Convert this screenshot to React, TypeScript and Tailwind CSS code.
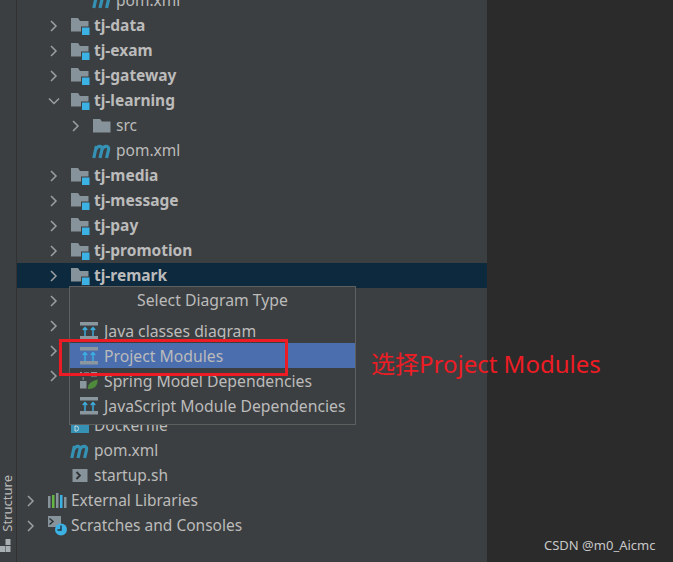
const uiFont = "font-['Noto_Sans',sans-serif]";

function Chevron({ open }: { open?: boolean }) {
  return (
    <svg width="12" height="12" viewBox="0 0 12 12" fill="none" stroke="#9c9fa1" strokeWidth="1.5">
      {open ? <path d="M1 3.5 L6 8.5 L11 3.5" /> : <path d="M3 1 L8 6 L3 11" />}
    </svg>
  );
}

function ModuleFolder() {
  return (
    <svg width="20" height="20" viewBox="0 0 20 20">
      <path d="M1 2 H8 L10 5 H18.5 V15.5 H1 Z" fill="#87939a" />
      <rect x="11" y="10.5" width="9" height="9" fill="#3c3f41" />
      <rect x="12" y="11.5" width="7.5" height="7.5" fill="#3cb1e4" />
    </svg>
  );
}

function PlainFolder() {
  return (
    <svg width="20" height="20" viewBox="0 0 20 20">
      <path d="M1 3 H8 L10 5.5 H18.5 V16.5 H1 Z" fill="#87939a" />
    </svg>
  );
}

function MavenIcon() {
  return (
    <svg width="20" height="20" viewBox="0 0 20 20" fill="none" stroke="#3592b5" strokeWidth="3.2">
      <path d="M1.8 17 L4.4 5 M3.8 8.5 Q5.8 4.8 8.2 5.4 Q10.6 6 9.9 8.8 L8 17 M10 8.5 Q12 4.8 14.6 5.4 Q17.2 6 16.5 8.8 L14.6 17" />
    </svg>
  );
}

function DockerIcon() {
  return (
    <svg width="20" height="20" viewBox="0 0 20 20">
      <rect x="1" y="8" width="18" height="9" fill="#3592b5" />
      <path d="M5 10 V15 H6.5 Q8.5 15 8.5 12.5 Q8.5 10 6.5 10 Z" fill="none" stroke="#c9d7de" strokeWidth="1" />
    </svg>
  );
}

function ScriptIcon() {
  return (
    <svg width="20" height="20" viewBox="0 0 20 20">
      <rect x="2.5" y="3" width="15" height="13" fill="#87939a" />
      <path d="M6.5 6 L10 9.5 L6.5 13" fill="none" stroke="#2f3234" strokeWidth="1.8" />
    </svg>
  );
}

function LibrariesIcon() {
  return (
    <svg width="20" height="20" viewBox="0 0 20 20">
      <rect x="1" y="5" width="2.5" height="12" fill="#87939a" />
      <rect x="5" y="4" width="2.5" height="13" fill="#62b543" />
      <rect x="9" y="2" width="2.5" height="15" fill="#87939a" />
      <rect x="13" y="4" width="2.5" height="13" fill="#3cb1e4" />
      <rect x="17" y="6" width="2.5" height="11" fill="#87939a" />
    </svg>
  );
}

function ScratchIcon() {
  return (
    <svg width="20" height="20" viewBox="0 0 20 20" className="overflow-visible">
      <rect x="1" y="0" width="13" height="11" fill="#87939a" />
      <path d="M2.5 2.5 L6 5.5 L2.5 8.5" fill="none" stroke="#2f3234" strokeWidth="1.5" />
      <circle cx="14" cy="13.5" r="6" fill="#3cb1e4" />
      <path d="M14 9.5 V14 H10.5" fill="none" stroke="#20333e" strokeWidth="1.4" />
    </svg>
  );
}

function DiagramIcon() {
  return (
    <svg width="18" height="18" viewBox="0 0 18 18">
      <rect x="0" y="0" width="18" height="3.5" fill="#8b979e" />
      <rect x="0" y="14" width="18" height="3.5" fill="#8b979e" />
      <path d="M5 14 V6 M2.8 8 L5 5.5 L7.2 8 M13 14 V6 M10.8 8 L13 5.5 L15.2 8" fill="none" stroke="#3cb1e4" strokeWidth="1.4" />
    </svg>
  );
}

function SpringIcon() {
  return (
    <svg width="18" height="18" viewBox="0 0 18 18">
      <rect x="0" y="9" width="6.5" height="7.5" fill="#8b979e" />
      <rect x="11" y="0" width="6" height="4.5" fill="#8b979e" />
      <rect x="0" y="0" width="2" height="3" fill="#8b979e" />
      <rect x="4" y="0" width="5" height="1.5" fill="#6f7a80" />
      <rect x="2.5" y="5" width="1.5" height="3" fill="#6f7a80" />
      <path d="M8 17 Q7 10 17.5 7.5 Q18.5 17 8 17 Z" fill="#4f8a3c" />
    </svg>
  );
}

type RowProps = {
  left: string;
  arrow?: "open" | "closed";
  icon?: React.ReactNode;
  label?: string;
  bold?: boolean;
  selected?: boolean;
};

function Row({ left, arrow, icon, label, bold, selected }: RowProps) {
  return (
    <div className={`h-[25px] flex items-center ${left} ${selected ? "bg-[#0d293e]" : ""}`}>
      <span className="w-[23px] shrink-0 flex items-center">
        {arrow && <Chevron open={arrow === "open"} />}
      </span>
      {icon && <span className="w-[24px] -ml-px shrink-0 flex items-center">{icon}</span>}
      {label && (
        <span className={`text-[15.5px] leading-none text-[#bbbbbb] whitespace-nowrap ${bold ? "font-bold" : ""}`}>
          {label}
        </span>
      )}
    </div>
  );
}

function MenuItem({ icon, label, active }: { icon: React.ReactNode; label: string; active?: boolean }) {
  return (
    <div className={`h-[25px] flex items-center pl-[10px] ${active ? "bg-[#4b6eaf]" : ""}`}>
      <span className="w-[24px] shrink-0 flex items-center">{icon}</span>
      <span className="pt-[2px] text-[15.75px] leading-none text-[#bbbbbb] whitespace-nowrap">{label}</span>
    </div>
  );
}

export default function App() {
  const d0 = "pl-[8px]";
  const d1 = "pl-[31px]";
  const d2 = "pl-[53px]";

  return (
    <div className={`relative w-[673px] h-[562px] overflow-hidden flex bg-[#3c3f41] ${uiFont}`}>
      {/* tool window rail */}
      <div className="w-[17px] shrink-0 border-r border-[#323232] flex flex-col items-start justify-end pl-px pb-[10px] gap-[7px]">
        <span className="[writing-mode:vertical-rl] rotate-180 text-[13px] leading-none text-[#bbbbbb]">Structure</span>
        <svg width="11" height="13" viewBox="0 0 11 13" fill="#a9b0b4" className="-ml-px">
          <rect x="5.5" y="0" width="5" height="6" />
          <rect x="0" y="7" width="5" height="6" />
          <rect x="5.5" y="7" width="5" height="6" />
        </svg>
      </div>

      {/* project tree */}
      <div className="w-[470px] shrink-0 -mt-[12px]">
        <Row left={d2} icon={<MavenIcon />} label="pom.xml" />
        <Row left={d1} arrow="closed" icon={<ModuleFolder />} label="tj-data" bold />
        <Row left={d1} arrow="closed" icon={<ModuleFolder />} label="tj-exam" bold />
        <Row left={d1} arrow="closed" icon={<ModuleFolder />} label="tj-gateway" bold />
        <Row left={d1} arrow="open" icon={<ModuleFolder />} label="tj-learning" bold />
        <Row left={d2} arrow="closed" icon={<PlainFolder />} label="src" />
        <Row left={d2} icon={<MavenIcon />} label="pom.xml" />
        <Row left={d1} arrow="closed" icon={<ModuleFolder />} label="tj-media" bold />
        <Row left={d1} arrow="closed" icon={<ModuleFolder />} label="tj-message" bold />
        <Row left={d1} arrow="closed" icon={<ModuleFolder />} label="tj-pay" bold />
        <Row left={d1} arrow="closed" icon={<ModuleFolder />} label="tj-promotion" bold />
        <Row left={d1} arrow="closed" icon={<ModuleFolder />} label="tj-remark" bold selected />
        <Row left={d1} arrow="closed" />
        <Row left={d1} arrow="closed" />
        <Row left={d1} arrow="closed" />
        <Row left={d1} arrow="closed" />
        <Row left={d1} />
        <Row left={d1} icon={<DockerIcon />} label="Dockerfile" />
        <Row left={d1} icon={<MavenIcon />} label="pom.xml" />
        <Row left={d1} icon={<ScriptIcon />} label="startup.sh" />
        <Row left={d0} arrow="closed" icon={<LibrariesIcon />} label="External Libraries" />
        <Row left={d0} arrow="closed" icon={<ScratchIcon />} label="Scratches and Consoles" />
      </div>

      {/* editor area */}
      <div className="flex-1 bg-[#2b2b2b]" />

      {/* diagram type popup */}
      <div className="absolute left-[69px] top-[286px] w-[287px] h-[139px] bg-[#3c3f41] border border-[#5e6060]">
        <div className="h-[31px] pb-[4px] flex items-center justify-center text-[15.75px] leading-none text-[#bbbbbb]">
          Select Diagram Type
        </div>
        <MenuItem icon={<DiagramIcon />} label="Java classes diagram" />
        <MenuItem icon={<DiagramIcon />} label="Project Modules" active />
        <MenuItem icon={<SpringIcon />} label="Spring Model Dependencies" />
        <MenuItem icon={<DiagramIcon />} label="JavaScript Module Dependencies" />
      </div>

      {/* red annotation */}
      <div className="absolute left-[59px] top-[339px] w-[229px] h-[37px] border-[3px] border-[#ed1c24]" />
      <div className="absolute left-[371px] top-[346px] text-[24px] leading-[36px] text-[#ed1c24] whitespace-nowrap font-['Noto_Sans','Noto_Sans_CJK_SC',sans-serif]">
        选择Project Modules
      </div>

      {/* watermark */}
      <div className="absolute left-[544px] top-[536px] text-[13px] leading-[18px] text-[#c8c8c8] whitespace-nowrap">
        CSDN @m0_Aicmc
      </div>
    </div>
  );
}
